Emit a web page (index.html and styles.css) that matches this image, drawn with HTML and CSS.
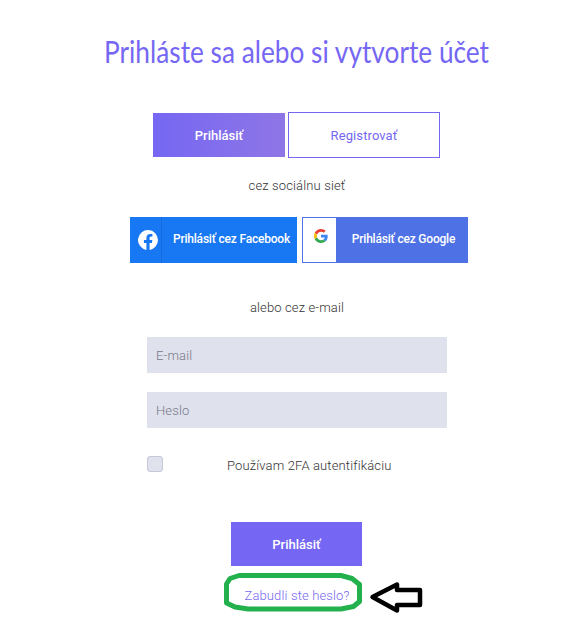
FILE: index.html
```html
<!DOCTYPE html>
<html lang="sk">
<head>
<meta charset="utf-8">
<title>Prihlásenie</title>
<link rel="stylesheet" href="styles.css">
</head>
<body>
<main class="login">
  <h1 class="title"><svg width="388" height="44"><text x="1" y="31" textLength="385" lengthAdjust="spacingAndGlyphs">Prihláste sa alebo si vytvorte účet</text></svg></h1>
  <nav class="tabs">
    <a class="tab active"><span>Prihlásiť</span></a>
    <a class="tab outline"><span>Registrovať</span></a>
  </nav>
  <p class="note social-note">cez sociálnu sieť</p>
  <div class="social">
    <a class="provider facebook">
      <span class="logo"><svg width="20" height="20" viewBox="0 0 24 24"><path fill="#fff" d="M24 12a12 12 0 1 0-13.9 11.9v-8.4h-3V12h3V9.4c0-3 1.800-4.700 4.500-4.700 1.300 0 2.700.2 2.700.2v3h-1.500c-1.500 0-1.900.9-1.900 1.900V12h3.300l-.5 3.500h-2.800v8.400A12 12 0 0 0 24 12z"/></svg></span>
      <span class="label">Prihlásiť cez Facebook</span>
    </a>
    <a class="provider google">
      <span class="logo"><svg width="14" height="14" viewBox="0 0 48 48"><path fill="#EA4335" d="M24 9.500c3.540 0 6.710 1.220 9.210 3.600l6.850-6.850C35.900 2.380 30.470 0 24 0 14.620 0 6.510 5.380 2.560 13.220l7.980 6.190C12.430 13.720 17.740 9.500 24 9.500z"/><path fill="#4285F4" d="M46.980 24.550c0-1.570-.15-3.090-.38-4.550H24v9.020h12.940c-.58 2.960-2.260 5.480-4.780 7.180l7.730 6c4.510-4.180 7.090-10.360 7.090-17.650z"/><path fill="#FBBC05" d="M10.530 28.590c-.48-1.450-.76-2.990-.76-4.590s.27-3.140.76-4.590l-7.980-6.190C.92 16.460 0 20.120 0 24c0 3.880.92 7.540 2.560 10.780z"/><path fill="#34A853" d="M24 48c6.480 0 11.930-2.130 15.890-5.810l-7.730-6c-2.150 1.450-4.920 2.300-8.160 2.300-6.260 0-11.570-4.220-13.470-9.910l-7.980 6.190C6.510 42.620 14.620 48 24 48z"/></svg></span>
      <span class="label">Prihlásiť cez Google</span>
    </a>
  </div>
  <p class="note mail-note">alebo cez e-mail</p>
  <form class="form">
    <input class="field" type="text" placeholder="E-mail">
    <input class="field" type="password" placeholder="Heslo">
    <div class="twofa"><span class="check"></span><span class="twofa-label">Používam 2FA autentifikáciu</span></div>
    <button class="submit" type="button">Prihlásiť</button>
    <div class="forgot">
      <a>Zabudli ste heslo?</a>
      <svg class="marker" width="208" height="44" viewBox="0 0 208 44">
        <path fill="none" stroke="#22b14c" stroke-width="5" stroke-linejoin="round" d="M4.500 14 8 8.500 17 5.500h102l11 3 7.500 6v17l-6 5-12.500 2.500H26l-13-2-8.500-4z"/>
        <path fill="#fff" stroke="#000" stroke-width="4.500" stroke-linejoin="round" d="M150.500 27 175 14.500v5.500h23v15h-23v5.500z"/>
      </svg>
    </div>
  </form>
</main>
</body>
</html>
```
FILE: styles.css
```css
* { box-sizing: border-box; }
body { margin: 0; background: #fff; color: #333; font: 300 13px/20px Roboto, "Liberation Sans", sans-serif; }
.login { width: 558px; height: 623px; margin-left: 18px; padding-top: 32px; display: flex; flex-direction: column; align-items: center; }
.title { margin: 0; height: 44px; font-weight: 400; }
.title svg { display: block; overflow: visible; }
.title text { font: 400 30px Lato, "Open Sans", sans-serif; fill: #7567f3; }
.tabs { display: flex; align-items: center; gap: 3px; margin: 36px 1px 0 0; }
.tab { display: flex; align-items: center; justify-content: center; width: 132px; height: 44px; padding-top: 1px; font-weight: 500; }
.active { color: #fff; background: linear-gradient(90deg, #7567f3, #8f76e6); }
.outline { width: 152px; height: 46px; color: #7567f3; border: 1px solid #7567f3; font-weight: 400; letter-spacing: .1px; }
.note { margin: 0; letter-spacing: .14px; }
.social-note { margin-top: 18px; }
.social { display: flex; gap: 5px; margin: 21px 0 0 4px; }
.provider { display: flex; height: 46px; color: #fff; font-size: 12px; font-weight: 500; letter-spacing: -.2px; }
.logo { display: flex; align-items: center; justify-content: center; }
.label { flex: 1; padding-top: 12px; text-align: center; white-space: nowrap; }
.facebook { width: 167px; background: #1877f2; }
.facebook .logo { width: 32px; border-right: 1px solid #176adb; padding: 0 0 0 5px; }
.facebook .label { padding-left: 4px; }
.google { width: 166px; background: #4e72e6; border: 1px solid #4e72e6; }
.google .logo { width: 33px; background: #fff; align-items: flex-start; padding: 11px 0 0 3px; }
.google .label { padding: 11px 0 0 4px; }
.mail-note { margin-top: 35px; }
.form { width: 300px; display: flex; flex-direction: column; align-items: center; margin-top: 19px; }
.field { width: 300px; height: 36px; margin: 0 0 19px; padding: 0 9px; border: 0; border-radius: 0; background: #dfe1ed; font: inherit; letter-spacing: .14px; }
.field::placeholder { color: #777987; opacity: 1; }
.twofa { width: 300px; height: 20px; display: flex; align-items: center; margin-top: 8px; letter-spacing: .14px; }
.check { width: 16px; height: 16px; border: 1px solid #c7c8d9; border-radius: 3px; background: #dfe1ed; position: relative; top: -1px; }
.twofa-label { margin-left: 64px; padding-top: 2px; white-space: nowrap; }
.submit { width: 131px; height: 44px; margin: 47px 1px 0 0; padding: 1px 0 0; border: 0; background: #7567f3; color: #fff; font: 500 13px/20px Roboto, sans-serif; }
.forgot { position: relative; margin-top: 20px; color: #7567f3; letter-spacing: .14px; }
.marker { position: absolute; left: -22px; top: -16px; }
```
